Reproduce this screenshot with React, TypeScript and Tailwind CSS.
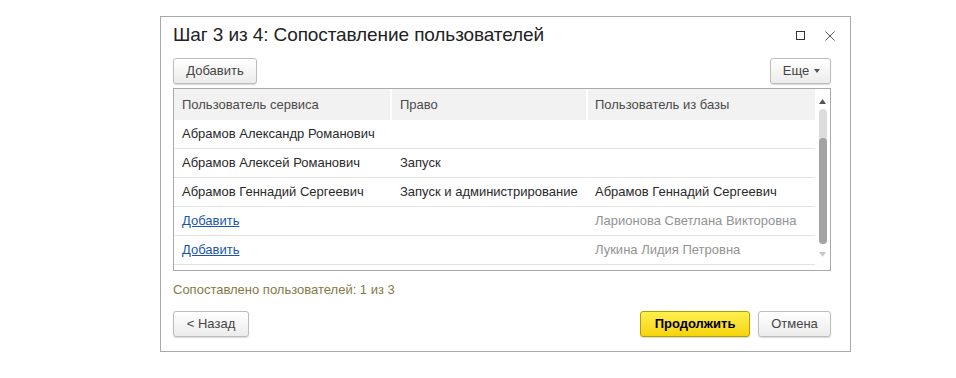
const rows = [
  { user: "Абрамов Александр Романович", right: "", base: "", link: false },
  { user: "Абрамов Алексей Романович", right: "Запуск", base: "", link: false },
  {
    user: "Абрамов Геннадий Сергеевич",
    right: "Запуск и администрирование",
    base: "Абрамов Геннадий Сергеевич",
    link: false,
  },
  { user: "Добавить", right: "", base: "Ларионова Светлана Викторовна", link: true },
  { user: "Добавить", right: "", base: "Лукина Лидия Петровна", link: true },
];

function GrayButton({ label, className = "" }: { label: React.ReactNode; className?: string }) {
  return (
    <button
      type="button"
      className={`flex h-[26px] items-center justify-center rounded-[3px] border border-[#bdbdbd] bg-gradient-to-b from-white to-[#ececec] text-[13px] text-[#444] shadow-[0_1px_1px_rgba(0,0,0,0.15)] ${className}`}
    >
      {label}
    </button>
  );
}

export default function App() {
  return (
    <main
      className="h-[378px] w-[956px] bg-white pl-[160px] pt-[16px] text-[#333]"
      style={{ fontFamily: '"Liberation Sans", Arial, sans-serif' }}
    >
      <div className="flex h-[336px] w-[691px] flex-col border border-[#a9a9a9]">
        <div className="flex h-[41px] items-center justify-between pb-[4px] pl-[12px] pr-[15px]">
          <h1 className="text-[19px] tracking-[-0.1px] text-[#222]">
            Шаг 3 из 4: Сопоставление пользователей
          </h1>
          <div className="flex items-center gap-[20px] text-[#444]">
            <svg width="9" height="9" viewBox="0 0 9 9">
              <rect x="0.5" y="0.5" width="8" height="8" fill="none" stroke="#333" />
            </svg>
            <svg width="10" height="10" viewBox="0 0 10 10">
              <path d="M0.5 0.5 L9.5 9.5 M9.5 0.5 L0.5 9.5" stroke="#555" strokeWidth="1" />
            </svg>
          </div>
        </div>

        <div className="flex flex-col px-[12px] pr-[19px]">
          <div className="flex justify-between">
            <GrayButton label="Добавить" className="w-[84px]" />
            <GrayButton
              className="w-[61px] gap-[5px] pl-[2px]"
              label={
                <>
                  <span>Еще</span>
                  <svg width="6" height="4" viewBox="0 0 6 4">
                    <path d="M0 0 H6 L3 4 Z" fill="#555" />
                  </svg>
                </>
              }
            />
          </div>

          <div className="mt-[4px] flex h-[183px] border border-[#a9a9a9]">
            <div className="flex flex-1 flex-col">
              <div className="flex h-[31px] bg-[#f2f2f2] text-[13px] text-[#4a4a4a]">
                <div className="flex w-[218px] items-center border-r-2 border-white pl-[8px]">
                  Пользователь сервиса
                </div>
                <div className="flex w-[196px] items-center border-r-2 border-white pl-[8px]">
                  Право
                </div>
                <div className="flex flex-1 items-center pl-[7px]">Пользователь из базы</div>
              </div>
              {rows.map((row, i) => (
                <div
                  key={i}
                  className="flex h-[29px] border-b border-[#e3e3e3] text-[13px] text-[#2a2a2a]"
                >
                  <div className="flex w-[218px] items-center pl-[8px]">
                    {row.link ? (
                      <span className="text-[#1a56a8] underline">{row.user}</span>
                    ) : (
                      row.user
                    )}
                  </div>
                  <div className="flex w-[196px] items-center pl-[8px]">{row.right}</div>
                  <div
                    className={`flex flex-1 items-center pl-[7px] ${
                      row.link ? "text-[#939393]" : ""
                    }`}
                  >
                    {row.base}
                  </div>
                </div>
              ))}
            </div>
            <div className="flex w-[15px] flex-col items-center pt-[10px]">
              <svg width="7" height="5" viewBox="0 0 7 5">
                <path d="M0 5 H7 L3.5 0 Z" fill="#555" />
              </svg>
              <div className="mt-[5px] flex h-[135px] w-[8px] flex-col rounded-[4px] bg-[#dcdcdc]">
                <div className="mt-[29px] flex-1 rounded-[4px] bg-[#a3a3a3]" />
              </div>
              <svg className="mt-[8px]" width="7" height="5" viewBox="0 0 7 5">
                <path d="M0 0 H7 L3.5 5 Z" fill="#c8c8c8" />
              </svg>
            </div>
          </div>

          <p className="mt-[9px] text-[13px] text-[#857a45]">
            Сопоставлено пользователей: 1 из 3
          </p>

          <div className="mt-[11px] flex items-center">
            <GrayButton label="< Назад" className="w-[76px]" />
            <button
              type="button"
              className="ml-auto flex h-[26px] w-[110px] items-center justify-center rounded-[3px] border border-[#b59d00] bg-gradient-to-b from-[#fff04a] to-[#f5d400] text-[13px] font-bold text-black shadow-[0_1px_1px_rgba(0,0,0,0.15)]"
            >
              Продолжить
            </button>
            <GrayButton label="Отмена" className="ml-[8px] w-[73px]" />
          </div>
        </div>
      </div>
    </main>
  );
}
